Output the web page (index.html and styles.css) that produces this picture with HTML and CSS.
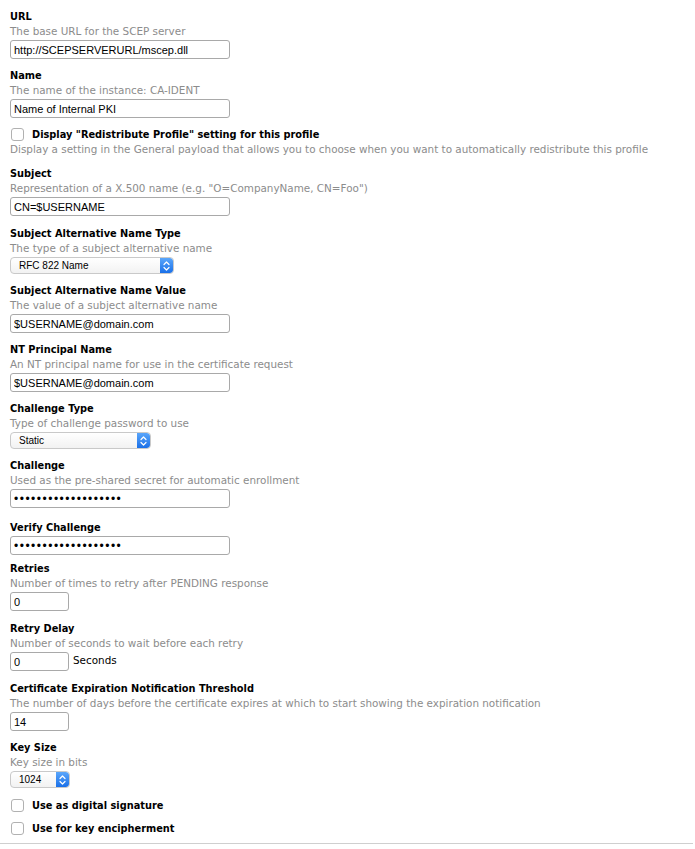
FILE: index.html
```html
<!DOCTYPE html>
<html>
<head>
<meta charset="utf-8">
<link rel="stylesheet" href="styles.css">
</head>
<body>
<div class="page">
  <div class="field">
    <div class="label">URL</div>
    <div class="desc">The base URL for the SCEP server</div>
    <input class="text wide" type="text" value="http://SCEPSERVERURL/mscep.dll">
  </div>
  <div class="field tight">
    <div class="label">Name</div>
    <div class="desc">The name of the instance: CA-IDENT</div>
    <input class="text wide" type="text" value="Name of Internal PKI">
  </div>
  <div class="field">
    <label class="check-row"><input class="check" type="checkbox"><span class="label">Display "Redistribute Profile" setting for this profile</span></label>
    <div class="desc">Display a setting in the General payload that allows you to choose when you want to automatically redistribute this profile</div>
  </div>
  <div class="field loose">
    <div class="label">Subject</div>
    <div class="desc">Representation of a X.500 name (e.g. "O=CompanyName, CN=Foo")</div>
    <input class="text wide" type="text" value="CN=$USERNAME">
  </div>
  <div class="field">
    <div class="label">Subject Alternative Name Type</div>
    <div class="desc">The type of a subject alternative name</div>
    <div class="select san"><span class="sel-text">RFC 822 Name</span><span class="stepper"><svg width="13" height="16" viewBox="0 0 13 16"><path d="M4 6.5 L6.5 4 L9 6.5 M4 9.5 L6.5 12 L9 9.5" fill="none" stroke="#fff" stroke-width="1.2" stroke-linecap="round" stroke-linejoin="round"/></svg></span></div>
  </div>
  <div class="field">
    <div class="label">Subject Alternative Name Value</div>
    <div class="desc">The value of a subject alternative name</div>
    <input class="text wide" type="text" value="$USERNAME@domain.com">
  </div>
  <div class="field">
    <div class="label">NT Principal Name</div>
    <div class="desc">An NT principal name for use in the certificate request</div>
    <input class="text wide" type="text" value="$USERNAME@domain.com">
  </div>
  <div class="field">
    <div class="label">Challenge Type</div>
    <div class="desc">Type of challenge password to use</div>
    <div class="select ctype"><span class="sel-text">Static</span><span class="stepper"><svg width="13" height="16" viewBox="0 0 13 16"><path d="M4 6.5 L6.5 4 L9 6.5 M4 9.5 L6.5 12 L9 9.5" fill="none" stroke="#fff" stroke-width="1.2" stroke-linecap="round" stroke-linejoin="round"/></svg></span></div>
  </div>
  <div class="field extra">
    <div class="label">Challenge</div>
    <div class="desc">Used as the pre-shared secret for automatic enrollment</div>
    <input class="text wide pw" type="text" value="•••••••••••••••••••">
  </div>
  <div class="field less">
    <div class="label">Verify Challenge</div>
    <input class="text wide pw" type="text" value="•••••••••••••••••••">
  </div>
  <div class="field loose">
    <div class="label">Retries</div>
    <div class="desc">Number of times to retry after PENDING response</div>
    <input class="text short" type="text" value="0">
  </div>
  <div class="field loose">
    <div class="label">Retry Delay</div>
    <div class="desc">Number of seconds to wait before each retry</div>
    <div class="inline-row"><input class="text short" type="text" value="0"><span class="unit">Seconds</span></div>
  </div>
  <div class="field">
    <div class="label">Certificate Expiration Notification Threshold</div>
    <div class="desc">The number of days before the certificate expires at which to start showing the expiration notification</div>
    <input class="text short" type="text" value="14">
  </div>
  <div class="field">
    <div class="label">Key Size</div>
    <div class="desc">Key size in bits</div>
    <div class="select ksize"><span class="sel-text">1024</span><span class="stepper"><svg width="13" height="16" viewBox="0 0 13 16"><path d="M4 6.5 L6.5 4 L9 6.5 M4 9.5 L6.5 12 L9 9.5" fill="none" stroke="#fff" stroke-width="1.2" stroke-linecap="round" stroke-linejoin="round"/></svg></span></div>
  </div>
  <label class="check-row solo"><input class="check" type="checkbox"><span class="label">Use as digital signature</span></label>
  <label class="check-row solo"><input class="check" type="checkbox"><span class="label">Use for key encipherment</span></label>
</div>
<div class="rule"></div>
</body>
</html>
```

FILE: styles.css
```css
html, body {
  margin: 0;
  padding: 0;
  background: #fff;
}
body {
  font-family: "DejaVu Sans", "Liberation Sans", sans-serif;
  font-size: 11px;
  color: #000;
}
.page {
  padding: 9px 10px 0 10px;
  height: 843px;
  box-sizing: border-box;
}
.field {
  margin-bottom: 9px;
}
.field.tight { margin-bottom: 8px; }
.field.loose { margin-bottom: 10px; }
.field.extra { margin-bottom: 12px; }
.field.less { margin-bottom: 6px; }
.label {
  font-family: "DejaVu Sans", sans-serif;
  font-weight: bold;
  line-height: 15px;
  font-size: 9.8px;
}
.desc {
  font-family: "DejaVu Sans", sans-serif;
  color: #8c8c8c;
  line-height: 15px;
  font-size: 10.4px;
}
.text {
  display: block;
  box-sizing: border-box;
  height: 19px;
  margin: 1px 0 0 0;
  border: 1px solid #a9a9a9;
  border-radius: 3px;
  padding: 0 3px;
  font-family: "Liberation Sans", Arial, sans-serif;
  font-size: 11px;
  color: #000;
  background: #fff;
  outline: none;
}
.wide { width: 220px; }
.short { width: 59px; }
.pw {
  font-size: 12px;
  letter-spacing: 1.5px;
}
.inline-row {
  display: flex;
  align-items: center;
  gap: 4px;
}
.unit {
  font-family: "DejaVu Sans", sans-serif;
  font-size: 10.4px;
  margin-top: -2px;
}
.select {
  margin-top: 1px;
  height: 17px;
  box-sizing: border-box;
  display: flex;
  align-items: stretch;
  border: 1px solid #c9c9c9;
  border-radius: 4px;
  background: linear-gradient(#ffffff, #f2f2f2);
  overflow: hidden;
}
.san { width: 164px; }
.ctype { width: 141px; }
.ksize { width: 60px; }
.sel-text {
  flex: 1;
  padding-left: 8px;
  font-family: "Liberation Sans", Arial, sans-serif;
  font-size: 10px;
  line-height: 15px;
}
.stepper {
  width: 13px;
  display: flex;
  align-items: center;
  justify-content: center;
  background: linear-gradient(#5aa6fb, #1a70e8);
  border-radius: 0 3px 3px 0;
}
.check-row {
  display: flex;
  align-items: center;
  gap: 8px;
  height: 16px;
}
.check {
  -webkit-appearance: none;
  appearance: none;
  width: 13px;
  height: 13px;
  margin: 0 0 0 1px;
  border: 1px solid #b1b1b1;
  border-radius: 3px;
  background: #fff;
  box-sizing: border-box;
}
.solo {
  margin-top: 1px;
  margin-bottom: 7px;
}
.rule {
  height: 1px;
  margin: 0 2px 0 0;
  background: #cfcfcf;
}
```
